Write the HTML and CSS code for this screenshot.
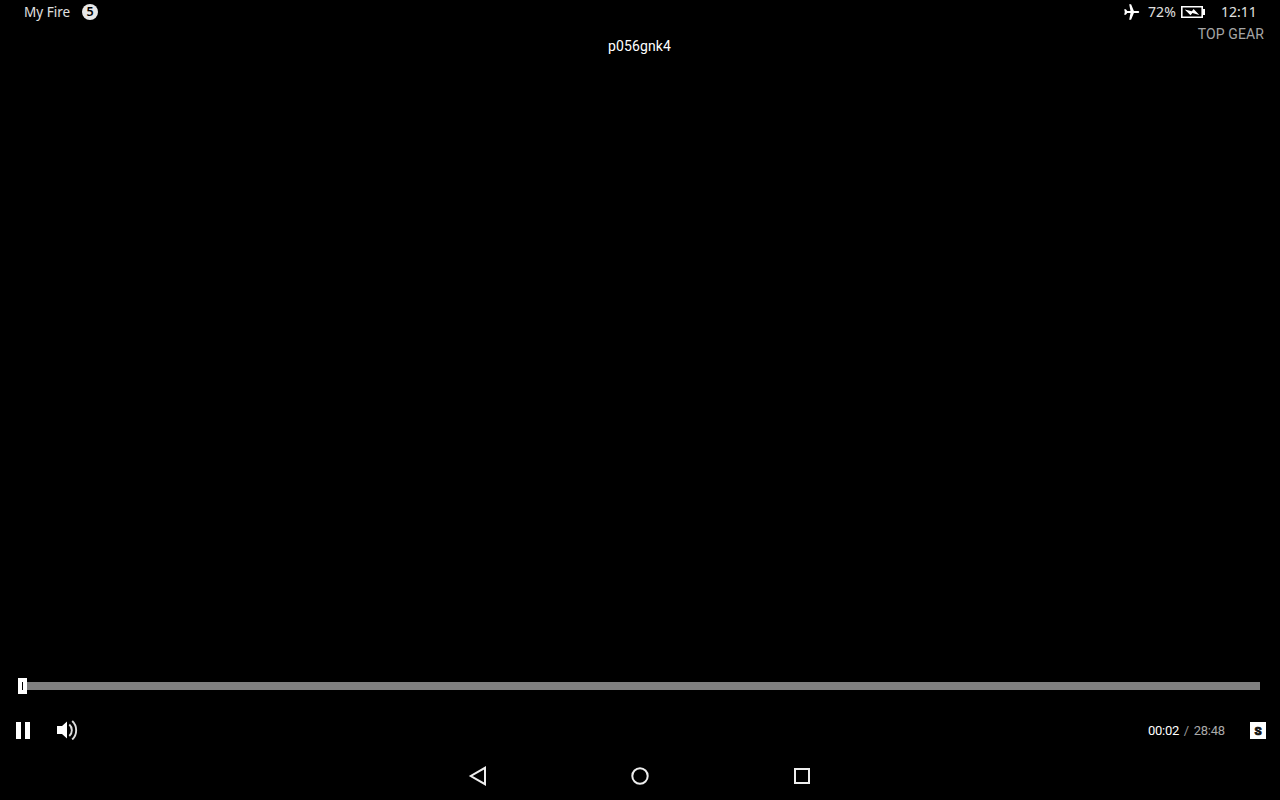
FILE: index.html
```html
<!DOCTYPE html>
<html lang="en">
<head>
<meta charset="utf-8">
<title>p056gnk4</title>
<link rel="stylesheet" href="styles.css">
</head>
<body>
<header class="status">
  <span class="device">My Fire</span>
  <span class="badge">5</span>
  <svg class="plane" width="16" height="16" viewBox="0 0 16 16"><path d="M15.200 8c0-.8-.6-1.100-1.400-1.100h-3.900L7.100.3H5.200l1.300 6.600H3.200L1.900 5.200H.2L.8 8l-.6 2.800h1.700l1.300-1.700h3.300L5.200 15.700h1.900l2.800-6.600h3.900C14.600 9.100 15.200 8.800 15.200 8z"/></svg>
  <span class="percent">72%</span>
  <svg class="battery" width="24" height="12" viewBox="0 0 24 12"><path class="line" d="M.8.800h20.400v10.400H.8z"/><path d="M21 3h3v6h-3zM3.700 3.600l7.200 1.700 1.700-2.400 5.700 6.100-6.900-2-1.900 2.300z"/></svg>
  <span class="clock">12:11</span>
</header>
<main class="player">
  <div class="channel">TOP GEAR</div>
  <h1 class="title">p056gnk4</h1>
  <div class="stage"></div>
  <div class="seek"><span class="thumb"><i></i></span><span class="track"></span></div>
  <div class="controls">
    <svg class="pause" width="14" height="17" viewBox="0 0 14 17"><path d="M0 0h5v17H0zM9 0h5v17H9z"/></svg>
    <svg class="volume" width="21" height="20" viewBox="0 0 21 20"><path d="M0 6h5l5-4.500v17L5 14H0z"/><path class="wave" d="M12.300 4.500c3.400 3 3.400 8.500 0 11.500M15.200 1c5.300 5 5.300 13.500 0 18.500"/></svg>
    <span class="time"><span class="now">00:02</span><span class="slash">/</span><span class="total">28:48</span></span>
    <span class="subtitles"><svg width="16" height="17" viewBox="0 0 16 17"><path d="M0 0h16v17H0z"/><text x="8" y="12.500">S</text></svg></span>
  </div>
</main>
<nav class="nav">
  <svg width="20" height="20" viewBox="0 0 20 20"><path d="M17 1.800v16.400L2.800 10z"/></svg>
  <svg width="20" height="20" viewBox="0 0 20 20"><circle cx="10" cy="10" r="7.700"/></svg>
  <svg width="20" height="20" viewBox="0 0 20 20"><path d="M3 3h14v14H3z"/></svg>
</nav>
</body>
</html>
```
FILE: styles.css
```css
* { box-sizing: border-box; }
body { margin: 0; height: 800px; display: flex; flex-direction: column; background: #000; color: #fff; font-family: Roboto, sans-serif; font-size: 14px; overflow: hidden; }
svg { display: block; flex: none; fill: #fff; }
.status { height: 24px; padding: 0 24px; display: flex; align-items: center; color: #e0e0e0; font-family: "Noto Sans", sans-serif; line-height: 24px; white-space: nowrap; }
.device { width: 58px; font-size: 13.5px; }
.badge { width: 16px; height: 16px; border-radius: 50%; background: #e8e8e8; color: #000; font-size: 12.5px; font-weight: 600; line-height: 16px; text-align: center; }
.plane { margin-left: auto; }
.percent { width: 33px; margin-left: 8px; font-size: 14px; letter-spacing: .1px; }
.battery .line { fill: none; stroke: #fff; stroke-width: 1.600; }
.clock { width: 35px; margin-left: 16px; font-size: 14px; }
.player { flex: 1; display: flex; flex-direction: column; }
.channel { height: 14px; padding-right: 16px; line-height: 21px; text-align: right; color: #a6a6a6; letter-spacing: .1px; }
.title { margin: 0; height: 16px; padding-right: 1px; line-height: 16px; text-align: center; font-size: 14px; font-weight: 400; letter-spacing: .15px; }
.stage { flex: 1; }
.seek { height: 16px; display: flex; align-items: center; padding: 0 20px 0 18px; }
.thumb { width: 9px; height: 16px; background: #fff; display: flex; align-items: center; justify-content: center; }
.thumb i { width: 1px; height: 8px; background: #000; }
.track { flex: 1; height: 8px; background: #808080; }
.controls { height: 58px; padding: 14px 14px 0 16px; display: flex; align-items: center; }
.volume { margin-left: 27px; }
.volume .wave { fill: none; stroke: #ddd; stroke-width: 1.900; }
.time { margin-left: auto; width: 102px; display: flex; font-size: 13px; letter-spacing: -.25px; }
.slash { width: 14.5px; text-align: center; color: #999; }
.total { color: #aaa; }
.subtitles text { fill: #111; stroke: #111; stroke-width: .7px; font: 900 11.5px Roboto, sans-serif; text-anchor: middle; }
.nav { height: 48px; display: flex; align-items: center; justify-content: center; gap: 142px; }
.nav svg { fill: none; stroke: #eee; stroke-width: 2; }
```
